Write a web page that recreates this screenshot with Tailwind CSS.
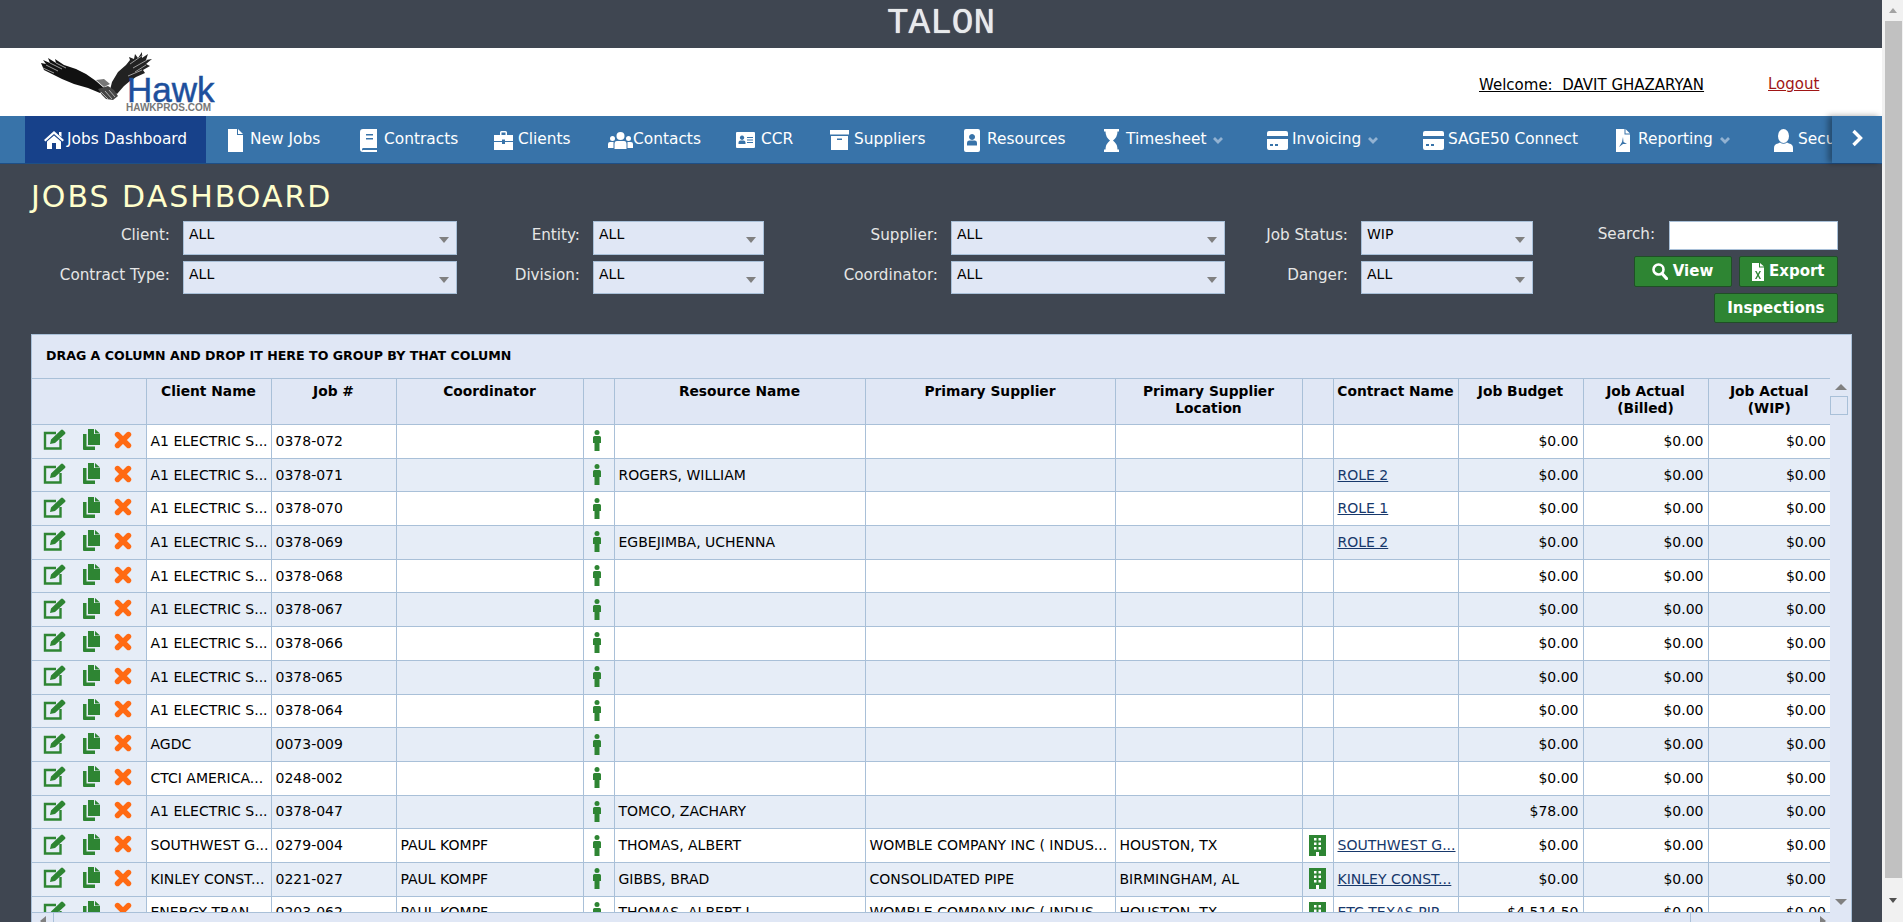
<!DOCTYPE html>
<html lang="en">
<head>
    <meta charset="UTF-8">
    <title>Jobs Dashboard</title>
    <script src="https://cdn.jsdelivr.net/npm/@tailwindcss/browser@4"></script>
</head>
<body class="h-[922px] overflow-hidden flex bg-[#3f4651] font-['DejaVu_Sans',sans-serif]">

<div class="w-[1882px] shrink-0 flex flex-col h-full">
    <!-- Top bar -->
    <div class="h-12 flex items-center justify-center text-[#e8eaec] text-[36px] font-['Liberation_Mono',monospace] [text-shadow:0_0_1px_#fff]">TALON</div>

    <!-- Logo + user -->
    <div class="h-[68px] bg-white flex relative shrink-0">
        <div class="relative w-[230px] h-full">
            <svg class="absolute left-[38px] top-[2px]" width="115" height="52" viewBox="0 0 115 52">
                <path d="M3 13 L8 14 L5 10 L12 13 L10 8 L18 13 L17 9 L26 15 L38 19 L48 24 L58 31 L66 38 L62 43 L50 38 L36 34 L24 29 L14 24 L6 20Z" fill="#111"/>
                <path d="M5 18 L16 23 M8 15 L20 21 M12 13 L24 19 M18 13 L28 18" stroke="#bbb" stroke-width="0.800"/>
                <path d="M74 32 L80 22 L88 15 L92 10 L91 7 L96 9 L97 4 L100 8 L104 2 L104 8 L110 4 L108 10 L114 9 L108 14 L112 16 L105 20 L107 23 L98 27 L92 31 L86 36 L79 44 L72 40Z" fill="#222"/>
                <path d="M92 14 L105 5 M95 18 L109 10 M97 22 L108 15 M90 26 L104 20" stroke="#aaa" stroke-width="0.900"/>
                <path d="M60 39 L70 36 L76 40 L80 46 L75 50 L68 49 L64 45Z" fill="#444"/>
                <path d="M63 42 L70 49 M67 41 L74 49 M71 40 L77 47" stroke="#bbb" stroke-width="0.900"/>
                <path d="M58 30 L66 29 L72 34 L66 37Z" fill="#777"/>
            </svg>
            <span class="absolute left-[127px] top-[29px] text-[35px] leading-[25px] text-[#1d4f9c] font-['Liberation_Sans',sans-serif] [-webkit-text-stroke:0.5px_#1d4f9c]">Hawk</span>
            <span class="absolute left-[126px] top-[55px] text-[10px] leading-[9px] font-bold text-[#777] font-['Liberation_Sans',sans-serif]">HAWKPROS.COM</span>
        </div>
        <a class="absolute left-[1479px] top-[26px] text-[15px] text-black underline whitespace-nowrap">Welcome:&nbsp; DAVIT GHAZARYAN</a>
        <a class="absolute left-[1768px] top-[25px] text-[15px] text-[#a01515] underline">Logout</a>
    </div>

    <!-- Nav -->
    <div class="h-12 bg-[#3873a9] border-b border-[#1e4f86] flex shrink-0 text-white text-[15.400px] relative">
        <div class="flex overflow-hidden w-[1832px] pl-[25px]">
            <a class="w-[181px] shrink-0 flex items-center pl-[19px] pt-[1px] bg-[#17418a]">
                <svg class="w-[20px] h-[18px] mr-[3px] shrink-0" viewBox="0 0 20 18" fill="#fff"><path d="M10 0 L20 9 L18.500 10.500 L10 3 L1.500 10.500 L0 9Z M15 1 H17.500 V6 L15 4Z M10 4.500 L17 10.500 V18 H12 V12 H8 V18 H3 V10.500Z"/></svg>Jobs Dashboard
            </a>
            <a class="w-[135px] shrink-0 flex items-center pl-[22px] pt-[1px]">
                <svg class="w-[15px] h-[23px] mr-[7px] shrink-0" viewBox="0 0 15 23" fill="#fff"><path d="M0 0 H9 V6 H15 V23 H0Z M10 0 L15 5 H10Z"/></svg>New Jobs
            </a>
            <a class="w-[134px] shrink-0 flex items-center pl-[19px] pt-[1px]">
                <svg class="w-[17px] h-[23px] mr-[7px] shrink-0" viewBox="0 0 17 23" fill="#fff"><path fill-rule="evenodd" d="M3 0 H17 V19 H3 Q2 19 2 20.500 T3 21 H17 V23 H3 Q0 23 0 20 V3 Q0 0 3 0Z M6 5 V6.500 H13 V5Z M6 9 V10.500 H13 V9Z"/></svg>Contracts
            </a>
            <a class="w-[114px] shrink-0 flex items-center pl-[19px] pt-[1px]">
                <svg class="w-[19px] h-[19px] mr-[5px] shrink-0" viewBox="0 0 19 19" fill="#fff"><path fill-rule="evenodd" d="M6 4 V1.500 Q6 0 7.500 0 H11.500 Q13 0 13 1.500 V4 H11.500 V1.500 H7.500 V4Z M0 4 H19 V10 H11 V8.500 H8 V10 H0Z M0 11 H8 V13 H11 V11 H19 V19 H0Z"/></svg>Clients
            </a>
            <a class="w-[128px] shrink-0 flex items-center pl-[19px] pt-[1px]">
                <svg class="w-[25px] h-[17px] mr-0 shrink-0" viewBox="0 0 25 17" fill="#fff"><circle cx="12.500" cy="4" r="4"/><circle cx="4.500" cy="6.500" r="2.500"/><circle cx="20.500" cy="6.500" r="2.500"/><path d="M6.500 17 V12 Q6.500 9 9 9 H16 Q18.500 9 18.500 12 V17Z M0 16 V12 Q0 10 2 10 H5.500 V16Z M25 16 V12 Q25 10 23 10 H19.500 V16Z"/></svg>Contacts
            </a>
            <a class="w-[94px] shrink-0 flex items-center pl-[19px] pt-[1px]">
                <svg class="w-[19px] h-[16px] mr-[6px] shrink-0" viewBox="0 0 19 16" fill="#fff"><path fill-rule="evenodd" d="M1 0 H18 Q19 0 19 1 V15 Q19 16 18 16 H1 Q0 16 0 15 V1 Q0 0 1 0Z M6 3.500 A2.200 2.200 0 1 0 6.100 3.500Z M2.500 12 H9.500 V10.500 Q9.500 8.500 7.500 8.500 H4.500 Q2.500 8.500 2.500 10.500Z M11 5 V6 H17 V5Z M11 7.500 V8.500 H17 V7.500Z M11 10 V11 H17 V10Z"/></svg>CCR
            </a>
            <a class="w-[134px] shrink-0 flex items-center pl-[19px] pt-[1px]">
                <svg class="w-[19px] h-[20px] mr-[5px] shrink-0" viewBox="0 0 19 20" fill="#fff"><path fill-rule="evenodd" d="M0 0 H19 V4.500 H0Z M1 6 H18 V20 H1Z M7 8.500 V10 H12 V8.500Z"/></svg>Suppliers
            </a>
            <a class="w-[140px] shrink-0 flex items-center pl-[19px] pt-[1px]">
                <svg class="w-[16px] h-[23px] mr-[7px] shrink-0" viewBox="0 0 16 23" fill="#fff"><path fill-rule="evenodd" d="M2 0 H14 Q16 0 16 2 V21 Q16 23 14 23 H2 Q0 23 0 21 V2 Q0 0 2 0Z M8 5 A3 3 0 1 0 8.100 5Z M3 16.500 H13 V14 Q13 11.500 11 11.500 H5 Q3 11.500 3 14Z"/></svg>Resources
            </a>
            <a class="w-[163px] shrink-0 flex items-center pl-[19px] pt-[1px]">
                <svg class="w-[15px] h-[23px] mr-[7px] shrink-0" viewBox="0 0 15 23" fill="#fff"><path d="M0 0 H15 V2.500 H13.500 Q13.500 8 9 11.500 Q13.500 15 13.500 20.500 H15 V23 H0 V20.500 H1.500 Q1.500 15 6 11.500 Q1.500 8 1.500 2.500 H0Z"/></svg>Timesheet
                <svg class="w-[10px] h-[7px] ml-[7px] shrink-0" viewBox="0 0 10 7"><path d="M1 1 L5 5 L9 1" stroke="#92b2d2" stroke-width="2.800" fill="none"/></svg>
            </a>
            <a class="w-[156px] shrink-0 flex items-center pl-[19px] pt-[1px]">
                <svg class="w-[21px] h-[19px] mr-[4px] shrink-0" viewBox="0 0 21 19" fill="#fff"><path fill-rule="evenodd" d="M2 0 H19 Q21 0 21 2 V5 H0 V2 Q0 0 2 0Z M0 8 H21 V17 Q21 19 19 19 H2 Q0 19 0 17Z M3 13 V15 H6 V13Z M8 13 V15 H11 V13Z"/></svg>Invoicing
                <svg class="w-[10px] h-[7px] ml-[7px] shrink-0" viewBox="0 0 10 7"><path d="M1 1 L5 5 L9 1" stroke="#92b2d2" stroke-width="2.800" fill="none"/></svg>
            </a>
            <a class="w-[193px] shrink-0 flex items-center pl-[19px] pt-[1px]">
                <svg class="w-[21px] h-[19px] mr-[4px] shrink-0" viewBox="0 0 21 19" fill="#fff"><path fill-rule="evenodd" d="M2 0 H19 Q21 0 21 2 V5 H0 V2 Q0 0 2 0Z M0 8 H21 V17 Q21 19 19 19 H2 Q0 19 0 17Z M3 13 V15 H6 V13Z M8 13 V15 H11 V13Z"/></svg>SAGE50 Connect
            </a>
            <a class="w-[158px] shrink-0 flex items-center pl-[19px] pt-[1px]">
                <svg class="w-[14px] h-[23px] mr-[8px] shrink-0" viewBox="0 0 14 23" fill="#fff"><path fill-rule="evenodd" d="M0 0 H8.500 V5.500 H14 V23 H0Z M9.500 0 L14 4.500 H9.500Z M7 8 L6 13 L3 18 L7 15 L11 15 L7.500 13Z" /></svg>Reporting
                <svg class="w-[10px] h-[7px] ml-[7px] shrink-0" viewBox="0 0 10 7"><path d="M1 1 L5 5 L9 1" stroke="#92b2d2" stroke-width="2.800" fill="none"/></svg>
            </a>
            <a class="w-[120px] shrink-0 flex items-center pl-[19px] pt-[1px]">
                <svg class="w-[19px] h-[23px] mr-[5px] shrink-0" viewBox="0 0 19 23" fill="#fff"><ellipse cx="9.500" cy="7" rx="5.500" ry="7"/><path d="M0 23 V19 Q0 15 4 14.500 L6 13.500 Q9.500 16 13 13.500 L15 14.500 Q19 15 19 19 V23Z"/></svg>Security
            </a>
        </div>
        <div class="w-[50px] shrink-0 flex items-center justify-center shadow-[-4px_0_6px_rgba(0,0,0,0.35)] bg-[#3873a9] z-10">
            <svg class="w-[12px] h-[18px] -mt-[3px]" viewBox="0 0 12 18"><path d="M2.500 2 L9.500 9 L2.500 16" stroke="#fff" stroke-width="3.400" fill="none"/></svg>
        </div>
    </div>

    <!-- Title -->
    <h1 class="h-[57px] pl-[31px] pt-[13px] text-[30px] leading-[40px] tracking-[2px] text-[#ffffcc] shrink-0">JOBS DASHBOARD</h1>

    <!-- Filters -->
    <div class="h-[113px] shrink-0 pl-[31px] flex text-[15.200px] text-[#e6e6e6]">
        <div class="grid grid-cols-[139px_287px_123px_184px_174px_287px_123px_185px] grid-rows-[34px_33px] gap-y-[6px] self-start" id="filters"></div>
        <div class="w-[305px] flex flex-col items-end">
            <div class="flex items-center h-[29px] w-full">
                <span class="w-[122px] text-right -mt-[3px]">Search:</span>
                <input class="ml-[14px] w-[169px] h-[29px] bg-white border border-[#a9c0d8]" type="text">
            </div>
            <div class="flex gap-[7px] mt-[6px] text-[15px]">
                <button class="w-[98px] h-[31px] bg-[#2e8533] border border-[#1f4f26] rounded-[2px] text-white font-bold flex items-center justify-center gap-[5px]">
                    <svg class="w-[16px] h-[17px]" viewBox="0 0 16 17"><circle cx="6.500" cy="6.500" r="5" stroke="#fff" stroke-width="2.600" fill="none"/><path d="M10 10.500 L14.500 15.500" stroke="#fff" stroke-width="3.200" stroke-linecap="round"/></svg>View
                </button>
                <button class="w-[99.500px] h-[31px] bg-[#2e8533] border border-[#1f4f26] rounded-[2px] text-white font-bold flex items-center justify-center gap-[5px]">
                    <svg class="w-[12px] h-[18px]" viewBox="0 0 12 18" fill="#fff"><path fill-rule="evenodd" d="M0 0 H7 V4.500 H12 V18 H0Z M8 0 L12 3.500 H8Z M3 8 L5.200 12 L3 16 H4.500 L6 13.300 L7.500 16 H9 L6.800 12 L9 8 H7.500 L6 10.700 L4.500 8Z"/></svg>Export
                </button>
            </div>
            <button class="mt-[6px] w-[124.500px] h-[30px] bg-[#2e8533] border border-[#1f4f26] rounded-[2px] text-white font-bold text-[15px]">Inspections</button>
        </div>
    </div>

    <!-- Grid -->
    <div class="ml-[31px] w-[1821px] flex-1 min-h-0 bg-[#e0e7f5] border-l border-r border-t border-[#a9c0d8] flex flex-col overflow-hidden">
        <div class="h-[43px] shrink-0 flex items-center pl-[14px] text-[12.600px] font-bold text-black">DRAG A COLUMN AND DROP IT HERE TO GROUP BY THAT COLUMN</div>
        <div class="flex-1 min-h-0 flex">
            <div class="w-[1798px] shrink-0 flex flex-col min-h-0">
                <div class="flex-1 min-h-0 overflow-hidden">
                    <table class="table-fixed border-collapse w-[1798px] text-[14px] text-black">
                        <colgroup>
                            <col class="w-[114px]"><col class="w-[125px]"><col class="w-[125px]"><col class="w-[187px]"><col class="w-[31px]"><col class="w-[251px]"><col class="w-[250px]"><col class="w-[187px]"><col class="w-[31px]"><col class="w-[125px]"><col class="w-[125px]"><col class="w-[125px]"><col class="w-[122px]">
                        </colgroup>
                        <thead>
                            <tr class="h-[46px] bg-[#e0e7f5] text-[13.800px]">
                                <th class="border border-l-0 border-[#a9c0d8]"></th>
                                <th class="border border-[#a9c0d8] align-top pt-[4px] leading-[17px] font-bold">Client Name</th>
                                <th class="border border-[#a9c0d8] align-top pt-[4px] leading-[17px] font-bold">Job #</th>
                                <th class="border border-[#a9c0d8] align-top pt-[4px] leading-[17px] font-bold">Coordinator</th>
                                <th class="border border-[#a9c0d8]"></th>
                                <th class="border border-[#a9c0d8] align-top pt-[4px] leading-[17px] font-bold">Resource Name</th>
                                <th class="border border-[#a9c0d8] align-top pt-[4px] leading-[17px] font-bold">Primary Supplier</th>
                                <th class="border border-[#a9c0d8] align-top pt-[4px] leading-[17px] font-bold">Primary Supplier<br>Location</th>
                                <th class="border border-[#a9c0d8]"></th>
                                <th class="border border-[#a9c0d8] align-top pt-[4px] leading-[17px] font-bold">Contract Name</th>
                                <th class="border border-[#a9c0d8] align-top pt-[4px] leading-[17px] font-bold">Job Budget</th>
                                <th class="border border-[#a9c0d8] align-top pt-[4px] leading-[17px] font-bold">Job Actual<br>(Billed)</th>
                                <th class="border border-[#a9c0d8] border-r-0 align-top pt-[4px] leading-[17px] font-bold">Job Actual<br>(WIP)</th>
                            </tr>
                        </thead>
                        <tbody id="rows"></tbody>
                    </table>
                </div>
                <!-- bottom scrollbar, cut off by the window -->
                <div class="h-[10px] shrink-0 flex border-t border-[#a9c0d8] bg-[#e0e7f5]">
                    <div class="w-[21px] shrink-0 flex justify-center pt-[3px]"><div class="w-0 h-0 border-y-[5px] border-y-transparent border-r-[6px] border-r-[#808080]"></div></div>
                    <div class="w-[1638px] shrink-0 border-l border-r border-[#a9c0d8]"></div>
                    <div class="flex-1 flex justify-end pr-[4px] pt-[3px]"><div class="w-0 h-0 border-y-[5px] border-y-transparent border-l-[6px] border-l-[#808080]"></div></div>
                </div>
            </div>
            <div class="flex-1 flex flex-col items-center pt-[6px] pb-[6px]">
                <div class="w-0 h-0 border-x-[6px] border-x-transparent border-b-[6px] border-b-[#808080]"></div>
                <div class="w-[18px] h-[19px] mt-[6px] border border-[#a9c0d8] -ml-[3px]"></div>
                <div class="flex-1"></div>
                <div class="w-0 h-0 border-x-[6px] border-x-transparent border-t-[6px] border-t-[#808080] mb-[11px]"></div>
            </div>
        </div>
    </div>
</div>

<!-- Window scrollbar -->
<div class="w-[21px] shrink-0 bg-[#f1f1f1] flex flex-col items-center pl-[1px]">
    <div class="h-[21px] flex items-center"><div class="w-0 h-0 border-x-[4px] border-x-transparent border-b-[5px] border-b-[#a3a3a3]"></div></div>
    <div class="h-[857px] w-[17px] bg-[#c1c1c1]"></div>
    <div class="flex-1 flex items-center"><div class="w-0 h-0 border-x-[4px] border-x-transparent border-t-[5px] border-t-[#505050]"></div></div>
</div>

<script>
const filters = [
    ['Client:', 'ALL', 'Entity:', 'ALL', 'Supplier:', 'ALL', 'Job Status:', 'WIP'],
    ['Contract Type:', 'ALL', 'Division:', 'ALL', 'Coordinator:', 'ALL', 'Danger:', 'ALL']
];
document.getElementById('filters').innerHTML = filters.map(row => row.map((text, i) => i % 2 === 0
    ? `<div class="text-right leading-[28px] whitespace-nowrap">${text}</div>`
    : `<div class="ml-[13px] relative bg-[#e0e7f5] border border-[#a9c0d8] text-[14px] text-black pl-[5px] pt-[2px] leading-[20px]">${text}<span class="absolute right-[7px] top-[15px] w-0 h-0 border-x-[5px] border-x-transparent border-t-[6px] border-t-[#808080]"></span></div>`
).join('')).join('');

const editIcon = `<svg class="w-[23px] h-[21px]" viewBox="0 0 23 21"><path d="M13 4 H2 V19.500 H17.500 V10" stroke="#2e8533" stroke-width="2.400" fill="none"/><path d="M7 15 L8 10.500 L18 1 Q19 0 20 1 L22 3 Q23 4 22 5 L12 14Z" fill="#2e8533"/></svg>`;
const copyIcon = `<svg class="w-[18px] h-[21px]" viewBox="0 0 18 21" fill="#2e8533"><path d="M5 0 H11 V5 H17 V16 H5Z M12 0 L17 4.500 H12Z"/><path d="M0 5 H3.500 V17.500 H12 V21 H1 Q0 21 0 20Z"/></svg>`;
const xIcon = `<svg class="w-[18px] h-[18px]" viewBox="0 0 18 18"><path d="M3.500 3.500 L14.500 14.500 M14.500 3.500 L3.500 14.500" stroke="#ff6a13" stroke-width="5.400" stroke-linecap="round"/></svg>`;
const personIcon = `<svg class="w-[8px] h-[21px] ml-[9px] -mt-[1px]" viewBox="0 0 8 21" fill="#2e8533"><circle cx="4" cy="2.500" r="2.500"/><path d="M1.500 6 H6.500 Q8 6 8 7.500 V13 H6.500 V21 H1.500 V13 H0 V7.500 Q0 6 1.500 6Z"/></svg>`;
const buildingIcon = `<svg class="w-[17px] h-[21px] mx-auto -mt-[1px]" viewBox="0 0 17 21"><path fill="#2e8533" d="M0 0 H17 V21 H0Z"/><path fill="#fff" d="M5 3 H7.500 V5.500 H5Z M9.500 3 H12 V5.500 H9.500Z M5 7.500 H7.500 V10 H5Z M9.500 7.500 H12 V10 H9.500Z M5 12 H7.500 V14.500 H5Z M9.500 12 H12 V14.500 H9.500Z M7 17 H10 V21 H7Z"/></svg>`;

const jobs = [
    ['A1 ELECTRIC S...', '0378-072', '', '', '', '', '', '$0.00'],
    ['A1 ELECTRIC S...', '0378-071', '', 'ROGERS, WILLIAM', '', '', 'ROLE 2', '$0.00'],
    ['A1 ELECTRIC S...', '0378-070', '', '', '', '', 'ROLE 1', '$0.00'],
    ['A1 ELECTRIC S...', '0378-069', '', 'EGBEJIMBA, UCHENNA', '', '', 'ROLE 2', '$0.00'],
    ['A1 ELECTRIC S...', '0378-068', '', '', '', '', '', '$0.00'],
    ['A1 ELECTRIC S...', '0378-067', '', '', '', '', '', '$0.00'],
    ['A1 ELECTRIC S...', '0378-066', '', '', '', '', '', '$0.00'],
    ['A1 ELECTRIC S...', '0378-065', '', '', '', '', '', '$0.00'],
    ['A1 ELECTRIC S...', '0378-064', '', '', '', '', '', '$0.00'],
    ['AGDC', '0073-009', '', '', '', '', '', '$0.00'],
    ['CTCI AMERICA...', '0248-002', '', '', '', '', '', '$0.00'],
    ['A1 ELECTRIC S...', '0378-047', '', 'TOMCO, ZACHARY', '', '', '', '$78.00'],
    ['SOUTHWEST G...', '0279-004', 'PAUL KOMPF', 'THOMAS, ALBERT', 'WOMBLE COMPANY INC ( INDUS...', 'HOUSTON, TX', 'SOUTHWEST G...', '$0.00'],
    ['KINLEY CONST...', '0221-027', 'PAUL KOMPF', 'GIBBS, BRAD', 'CONSOLIDATED PIPE', 'BIRMINGHAM, AL', 'KINLEY CONST...', '$0.00'],
    ['ENERGY TRAN...', '0203-062', 'PAUL KOMPF', 'THOMAS, ALBERT J', 'WOMBLE COMPANY INC ( INDUS...', 'HOUSTON, TX', 'ETC TEXAS PIP...', '$4,514.50']
];

const cell = 'border border-[#a9c0d8] px-[4px] whitespace-nowrap overflow-hidden';
document.getElementById('rows').innerHTML = jobs.map((j, i) => `
    <tr class="h-[33.7px] ${i % 2 === 0 ? 'bg-white' : 'bg-[#e6edf7]'}">
        <td class="border border-l-0 border-[#a9c0d8] bg-[#e6edf7]"><div class="flex items-center pl-[11px] -mt-[3px]">${editIcon}<span class="ml-[17px]">${copyIcon}</span><span class="ml-[13px]">${xIcon}</span></div></td>
        <td class="${cell}">${j[0]}</td>
        <td class="${cell}">${j[1]}</td>
        <td class="${cell}">${j[2]}</td>
        <td class="border border-[#a9c0d8]">${personIcon}</td>
        <td class="${cell}">${j[3]}</td>
        <td class="${cell}">${j[4]}</td>
        <td class="${cell}">${j[5]}</td>
        <td class="border border-[#a9c0d8]">${j[4] ? buildingIcon : ''}</td>
        <td class="${cell}"><a class="underline text-[#17386b]">${j[6]}</a></td>
        <td class="${cell} text-right">${j[7]}</td>
        <td class="${cell} text-right">$0.00</td>
        <td class="${cell} border-r-0 text-right">$0.00</td>
    </tr>`).join('');
</script>
</body>
</html>
